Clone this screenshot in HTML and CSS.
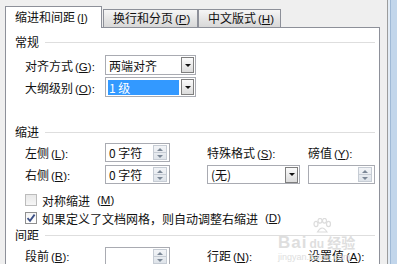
FILE: index.html
```html
<html>
<head>
  <title>段落 - 缩进和间距</title>
  <link rel="stylesheet" href="styles.css">
</head>
<body>
  <div class="window">
    <div class="dialog">
      <!-- Tab strip -->
      <div class="tabs">
        <div class="tab active">缩进和间距<span class="key">(<u>I</u>)</span></div>
        <div class="tab tab-break">换行和分页<span class="key">(<u>P</u>)</span></div>
        <div class="tab tab-asian">中文版式<span class="key">(<u>H</u>)</span></div>
      </div>

      <!-- Tab panel -->
      <div class="panel">
        <div class="group-title">常规</div>
        <div class="general">
          <div class="row">
            <span class="label">对齐方式<span class="key">(<u>G</u>):</span></span>
            <div class="combo combo-wide">
              <span class="combo-text">两端对齐</span>
              <span class="drop-btn"></span>
            </div>
          </div>
          <div class="row">
            <span class="label">大纲级别<span class="key">(<u>O</u>):</span></span>
            <div class="combo combo-wide">
              <span class="combo-text selected">1 级</span>
              <span class="drop-btn"></span>
            </div>
          </div>
        </div>

        <div class="group-title indent-title">缩进</div>
        <div class="field-grid indent-grid">
          <span class="label">左侧<span class="key">(<u>L</u>):</span></span>
          <div class="spin"><span class="spin-text">0 字符</span><span class="spin-btns"><i class="up"></i><i class="down"></i></span></div>
          <span class="label col-4">特殊格式<span class="key">(<u>S</u>):</span></span>
          <span class="label col-6">磅值<span class="key">(<u>Y</u>):</span></span>

          <span class="label">右侧<span class="key">(<u>R</u>):</span></span>
          <div class="spin"><span class="spin-text">0 字符</span><span class="spin-btns"><i class="up"></i><i class="down"></i></span></div>
          <div class="combo col-4">
            <span class="combo-text">(无)</span>
            <span class="drop-btn"></span>
          </div>
          <div class="spin col-6"><span class="spin-text"></span><span class="spin-btns"><i class="up"></i><i class="down"></i></span></div>
        </div>

        <div class="checks">
          <label class="check-row"><span class="checkbox dim"></span>对称缩进<span class="key">(<u>M</u>)</span></label>
          <label class="check-row">
            <span class="checkbox">
              <svg width="10" height="10" viewBox="0 0 10 10"><path d="M1.5 5.2 L4 7.8 L8.6 1.6" fill="none" stroke="#3b4f86" stroke-width="1.8"/></svg>
            </span>如果定义了文档网格，则自动调整右缩进<span class="key">(<u>D</u>)</span>
          </label>
        </div>

        <div class="group-title">间距</div>
        <div class="field-grid spacing-grid">
          <span class="label">段前<span class="key">(<u>B</u>):</span></span>
          <div class="spin"><span class="spin-text"></span><span class="spin-btns"><i class="up"></i><i class="down"></i></span></div>
          <span class="label col-4">行距<span class="key">(<u>N</u>):</span></span>
          <span class="label col-6">设置值<span class="key">(<u>A</u>):</span></span>
        </div>

        <!-- Faint site watermark over the panel -->
        <div class="watermark">
          <svg class="wm-paw" width="22" height="16" viewBox="0 0 22 16">
            <g fill="none" stroke="#dcdcdc" stroke-width="1.2">
              <ellipse cx="5" cy="6" rx="2" ry="2.6"/>
              <ellipse cx="9" cy="2.8" rx="2" ry="2.4"/>
              <ellipse cx="13.5" cy="2.8" rx="2" ry="2.4"/>
              <ellipse cx="17.5" cy="6" rx="2" ry="2.6"/>
              <path d="M6.5 14 Q11 6 16 14 Z"/>
            </g>
          </svg>
          <div class="wm-logo"><span class="wm-bai">Bai</span><span class="wm-du">du</span><span class="wm-jy">经验</span></div>
          <div class="wm-url">jingyan.baidu.com</div>
        </div>
      </div>
    </div>
    <div class="frame-edge"></div>
  </div>
</body>
</html>
```

FILE: styles.css
```css
/* Page */
body {
  margin: 0;
  background: #fff;
  font-family: "Noto Sans CJK SC", "Liberation Sans", sans-serif;
  font-size: 12px;
  color: #111;
}

/* Window: dialog body plus the blue frame on the right */
.window {
  display: flex;
  height: 264px;
  overflow: hidden;
}

.dialog {
  width: 388px;
  box-sizing: border-box;
  padding: 6px 7px 0 5px;
  background: #efefef;
  display: flex;
  flex-direction: column;
}

.frame-edge {
  width: 9px;
  border-left: 1px solid #9c9c9c;
  background: linear-gradient(to right, #e3ecf5 0 2px, #9fb9d6 2px 3px, #c2d6eb 3px);
}

/* Tabs */
.tabs {
  display: flex;
  align-items: flex-end;
  height: 21px;
}

.tab {
  height: 18px;
  box-sizing: border-box;
  border: 1px solid #8d9099;
  border-bottom: none;
  background: linear-gradient(#f6f6f6, #e6e6e6 50%, #d8d8d8);
  padding-left: 9px;
  line-height: 16px;
  white-space: nowrap;
}

.tab.active {
  width: 97px;
  height: 22px;
  margin-bottom: -1px;
  padding-top: 2px;
  background: #fff;
  position: relative;
  z-index: 1;
}

.tab-break {
  width: 95px;
  margin-left: 1px;
}

.tab-asian {
  width: 83px;
}

/* Mnemonic key in brackets */
.key {
  font-family: "Liberation Sans", sans-serif;
  font-size: 11.5px;
  margin-left: 2px;
}

/* Panel */
.panel {
  flex: 1;
  position: relative;
  background: #fff;
  border: 1px solid #8d9099;
  border-bottom: none;
  padding: 6px 4px 0 9px;
}

/* Section headings with a rule after them */
.group-title {
  display: flex;
  align-items: center;
  gap: 6px;
  height: 16px;
  line-height: 16px;
}

.group-title::after {
  content: "";
  flex: 1;
  border-top: 1px solid #dedede;
}

.indent-title {
  margin-top: 27px;
}

/* General section */
.general {
  display: flex;
  flex-direction: column;
  gap: 2px;
  margin-top: 5px;
  padding-left: 10px;
}

.row {
  display: flex;
  align-items: center;
  height: 20px;
}

.label {
  width: 80px;
  white-space: nowrap;
}

/* Combo boxes */
.combo {
  height: 20px;
  box-sizing: border-box;
  border: 1px solid #a9abb2;
  background: #fff;
  display: flex;
  align-items: center;
  padding: 1px 1px 1px 2px;
}

.combo-wide {
  width: 91px;
}

.combo-text {
  flex: 1;
  height: 15px;
  line-height: 15px;
  padding-left: 1px;
  margin-right: 2px;
  white-space: nowrap;
}

.combo-text.selected {
  background: #3399ff;
  color: #fff;
}

.drop-btn {
  width: 13px;
  height: 16px;
  box-sizing: border-box;
  border: 1px solid #7f7f7f;
  background: linear-gradient(#fbfbfb, #dcdcdc);
  display: flex;
  align-items: center;
  justify-content: center;
}

.drop-btn::after {
  content: "";
  border-left: 3px solid transparent;
  border-right: 3px solid transparent;
  border-top: 3px solid #111;
}

/* Grids for indent and spacing fields */
.field-grid {
  display: grid;
  grid-template-columns: 80px 65px 37px 93px 8px 67px;
  grid-auto-rows: 19px;
  row-gap: 3px;
  align-items: center;
  padding-left: 10px;
}

.indent-grid {
  margin-top: 3px;
}

.spacing-grid {
  margin-top: 4px;
  line-height: 13px;
}

.col-4 {
  grid-column: 4;
}

.col-6 {
  grid-column: 6;
}

.field-grid .combo {
  height: 19px;
}

/* Spin boxes */
.spin {
  height: 19px;
  box-sizing: border-box;
  border: 1px solid #a9abb2;
  display: flex;
  align-items: center;
  padding-left: 3px;
  padding-right: 2px;
}

.spin-text {
  flex: 1;
  white-space: nowrap;
}

.spin-btns {
  width: 14px;
  height: 15px;
  box-sizing: border-box;
  border: 1px solid #c6ccd4;
  background: linear-gradient(#f2f4f7, #dfe4ea);
  display: flex;
  flex-direction: column;
}

.spin-btns i {
  flex: 1;
  display: flex;
  align-items: center;
  justify-content: center;
}

.spin-btns .up {
  border-bottom: 1px solid #c6ccd4;
}

.spin-btns .up::after,
.spin-btns .down::after {
  content: "";
  border-left: 3px solid transparent;
  border-right: 3px solid transparent;
}

.spin-btns .up::after {
  border-bottom: 3px solid #7b8796;
}

.spin-btns .down::after {
  border-top: 3px solid #7b8796;
}

/* Check boxes */
.checks {
  margin-top: 7px;
  padding-left: 10px;
}

.check-row {
  display: flex;
  align-items: center;
  gap: 5px;
  height: 18px;
  white-space: nowrap;
}

.checkbox {
  width: 12px;
  height: 12px;
  box-sizing: border-box;
  border: 1px solid #8f8f8f;
  background: linear-gradient(#f4f4f4, #fff);
  display: flex;
  align-items: center;
  justify-content: center;
}

.checkbox.dim {
  border-color: #bcbcbc;
  background: linear-gradient(#e8e8e8, #f6f6f6);
}

/* Watermark */
.watermark {
  position: absolute;
  left: 272px;
  top: 190px;
  width: 92px;
  color: #dedede;
  pointer-events: none;
}

.wm-paw {
  display: block;
  margin-left: 33px;
}

.wm-logo {
  display: flex;
  align-items: baseline;
  font-family: "Liberation Sans", "Noto Sans CJK SC", sans-serif;
  font-weight: bold;
  line-height: 16px;
}

.wm-bai {
  font-size: 17px;
  letter-spacing: 1px;
}

.wm-du {
  font-size: 12px;
  margin: 0 3px 0 2px;
}

.wm-jy {
  font-family: "Noto Sans CJK SC", sans-serif;
  font-size: 14px;
}

.wm-url {
  font-family: "Liberation Sans", sans-serif;
  font-size: 9px;
  line-height: 10px;
}
```
